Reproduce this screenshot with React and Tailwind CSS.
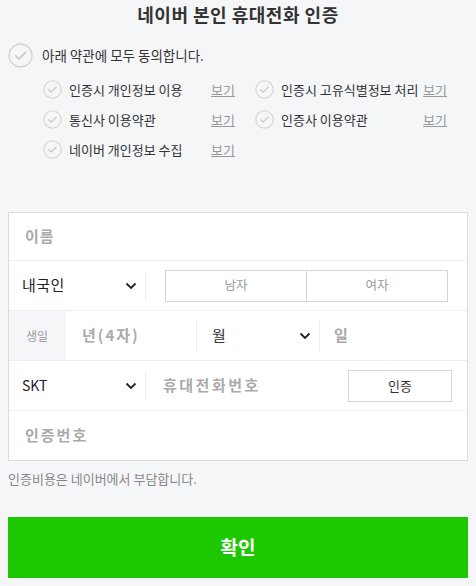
import { useState } from 'react'

const font = { fontFamily: '"Noto Sans CJK KR", "Noto Sans", sans-serif' }

function CheckCircle({ size = 19 }) {
  return (
    <svg width={size} height={size} viewBox="0 0 24 24" className="shrink-0">
      <circle cx="12" cy="12" r="11" fill="none" stroke="#d2d2d2" strokeWidth="1.3" />
      <path d="M7.3 12.3l3.1 3.1 6.3-6.4" fill="none" stroke="#c4c4c4" strokeWidth="1.4" strokeLinecap="round" strokeLinejoin="round" />
    </svg>
  )
}

function Chevron() {
  return (
    <svg width="12" height="8" viewBox="0 0 12 8" className="shrink-0">
      <path d="M1.5 1.5l4.5 4.5 4.5-4.5" fill="none" stroke="#222" strokeWidth="1.8" />
    </svg>
  )
}

const terms = [
  ['인증시 개인정보 이용', '인증시 고유식별정보 처리'],
  ['통신사 이용약관', '인증사 이용약관'],
  ['네이버 개인정보 수집', null],
]

function Term({ label }) {
  return (
    <div className="flex items-center w-[192px] shrink-0">
      <CheckCircle />
      <span className="ml-[7px] text-[13px] text-[#333] whitespace-nowrap">{label}</span>
      <span className="ml-auto text-[13px] text-[#999] underline">보기</span>
    </div>
  )
}

export default function App() {
  const [gender, setGender] = useState(null)

  return (
    <div style={font} className="w-[476px] h-[586px] bg-[#f5f6f8] px-2 overflow-hidden">
      <div className="pt-[3px] text-center text-[18px] font-bold text-[#333] leading-[22px] tracking-[0.5px]">네이버 본인 휴대전화 인증</div>

      <div className="mt-[18px] flex items-center">
        <CheckCircle size={25} />
        <span className="ml-[9px] text-[13.5px] text-[#333]">아래 약관에 모두 동의합니다.</span>
      </div>

      <div className="mt-[12px] ml-[35px] flex flex-col gap-[11px]">
        {terms.map(([a, b]) => (
          <div key={a} className="flex items-center gap-[20px] h-[19px]">
            <Term label={a} />
            {b && <Term label={b} />}
          </div>
        ))}
      </div>

      <div className="mt-[53px] bg-white border border-[#dadada] text-[15px]">
        <div className="h-[48px] border-b border-[#eee] flex items-center px-4">
          <span className="font-bold text-[#aaa] tracking-[1px]">이름</span>
        </div>

        <div className="h-[50px] border-b border-[#eee] flex items-center">
          <div className="w-[136px] flex items-center justify-between pl-[13px] pr-[8px]">
            <span className="text-[#222] tracking-[0.5px]">내국인</span>
            <Chevron />
          </div>
          <div className="w-px h-[30px] bg-[#eee]" />
          <div className="ml-[19px] w-[283px] h-[32px] flex border border-[#d5d5d5] text-[12.5px] text-[#999]">
            <button onClick={() => setGender('m')} className={`flex-1 border-r border-[#d5d5d5] ${gender === 'm' ? 'text-[#1ec800]' : ''}`}>남자</button>
            <button onClick={() => setGender('f')} className={`flex-1 ${gender === 'f' ? 'text-[#1ec800]' : ''}`}>여자</button>
          </div>
        </div>

        <div className="h-[50px] border-b border-[#eee] flex items-center">
          <div className="w-[57px] h-full bg-[#f5f6f8] flex items-center pl-[17px] text-[12px] text-[#999]">생일</div>
          <div className="w-[130px] pl-4 font-bold text-[#aaa] tracking-[2px]">년(4자)</div>
          <div className="w-px h-[32px] bg-[#eee]" />
          <div className="w-[122px] flex items-center justify-between pl-[15px] pr-[8px]">
            <span className="text-[#333]">월</span>
            <Chevron />
          </div>
          <div className="w-px h-[32px] bg-[#eee]" />
          <div className="pl-[14px] font-bold text-[#aaa]">일</div>
        </div>

        <div className="h-[50px] border-b border-[#eee] flex items-center">
          <div className="w-[136px] flex items-center justify-between pl-[13px] pr-[8px]">
            <span className="text-[14px] text-[#222]">SKT</span>
            <Chevron />
          </div>
          <div className="w-px h-[30px] bg-[#eee]" />
          <span className="ml-[17px] font-bold text-[#aaa] tracking-[2.5px]">휴대전화번호</span>
          <button className="ml-auto mr-[15px] w-[104px] h-[32px] border border-[#d5d5d5] text-[13px] text-[#333]">인증</button>
        </div>

        <div className="h-[49px] flex items-center px-4">
          <span className="font-bold text-[#aaa] tracking-[2px]">인증번호</span>
        </div>
      </div>

      <div className="mt-[8px] text-[13px] text-[#888]">인증비용은 네이버에서 부담합니다.</div>

      <button className="mt-[28px] w-full h-[61px] bg-[#1ec800] text-white text-[19px] font-bold">확인</button>
    </div>
  )
}
